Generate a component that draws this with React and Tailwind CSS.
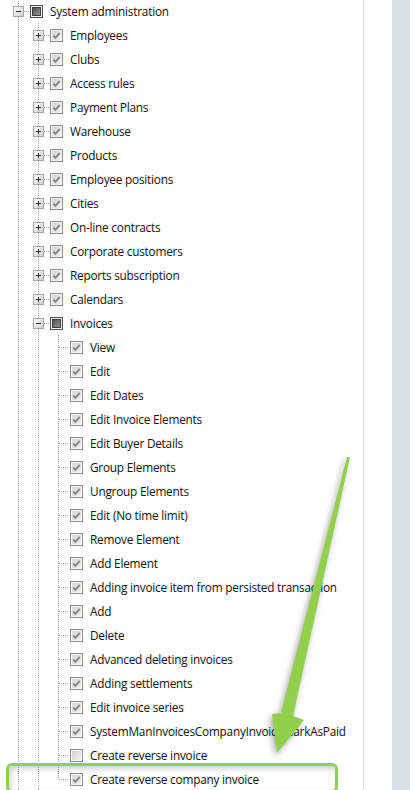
import React from 'react';

const tree = [
    { label: 'System administration', level: 0, kind: 'open', state: 'partial' },
    { label: 'Employees', level: 1, kind: 'closed', state: 'checked' },
    { label: 'Clubs', level: 1, kind: 'closed', state: 'checked' },
    { label: 'Access rules', level: 1, kind: 'closed', state: 'checked' },
    { label: 'Payment Plans', level: 1, kind: 'closed', state: 'checked' },
    { label: 'Warehouse', level: 1, kind: 'closed', state: 'checked' },
    { label: 'Products', level: 1, kind: 'closed', state: 'checked' },
    { label: 'Employee positions', level: 1, kind: 'closed', state: 'checked' },
    { label: 'Cities', level: 1, kind: 'closed', state: 'checked' },
    { label: 'On-line contracts', level: 1, kind: 'closed', state: 'checked' },
    { label: 'Corporate customers', level: 1, kind: 'closed', state: 'checked' },
    { label: 'Reports subscription', level: 1, kind: 'closed', state: 'checked' },
    { label: 'Calendars', level: 1, kind: 'closed', state: 'checked' },
    { label: 'Invoices', level: 1, kind: 'open', state: 'partial' },
    { label: 'View', level: 2, kind: 'leaf', state: 'checked' },
    { label: 'Edit', level: 2, kind: 'leaf', state: 'checked' },
    { label: 'Edit Dates', level: 2, kind: 'leaf', state: 'checked' },
    { label: 'Edit Invoice Elements', level: 2, kind: 'leaf', state: 'checked' },
    { label: 'Edit Buyer Details', level: 2, kind: 'leaf', state: 'checked' },
    { label: 'Group Elements', level: 2, kind: 'leaf', state: 'checked' },
    { label: 'Ungroup Elements', level: 2, kind: 'leaf', state: 'checked' },
    { label: 'Edit (No time limit)', level: 2, kind: 'leaf', state: 'checked' },
    { label: 'Remove Element', level: 2, kind: 'leaf', state: 'checked' },
    { label: 'Add Element', level: 2, kind: 'leaf', state: 'checked' },
    { label: 'Adding invoice item from persisted transaction', level: 2, kind: 'leaf', state: 'checked' },
    { label: 'Add', level: 2, kind: 'leaf', state: 'checked' },
    { label: 'Delete', level: 2, kind: 'leaf', state: 'checked' },
    { label: 'Advanced deleting invoices', level: 2, kind: 'leaf', state: 'checked' },
    { label: 'Adding settlements', level: 2, kind: 'leaf', state: 'checked' },
    { label: 'Edit invoice series', level: 2, kind: 'leaf', state: 'checked' },
    { label: 'SystemManInvoicesCompanyInvoiceMarkAsPaid', level: 2, kind: 'leaf', state: 'checked' },
    { label: 'Create reverse invoice', level: 2, kind: 'leaf', state: 'unchecked' },
    { label: 'Create reverse company invoice', level: 2, kind: 'leaf', state: 'checked', last: true, highlight: true }
];

const DOT = '#a3a3a3';

// one 20x24 slot of the tree gutter: guide line, connector and +/- box
const Gutter = ({ kind, last }) => (
    <svg width="20" height="24" className="shrink-0 block" shapeRendering="crispEdges">
        {kind !== 'blank' && (
            <line x1="9.5" y1="0" x2="9.5" y2={last ? 12 : 24} stroke={DOT} strokeDasharray="1 1" />
        )}
        {(kind === 'leaf' || kind === 'open' || kind === 'closed') && (
            <line x1={kind === 'leaf' ? 10 : 15} y1="12.5" x2="21" y2="12.5" stroke={DOT} strokeDasharray="1 1" />
        )}
        {(kind === 'open' || kind === 'closed') && (
            <g>
                <rect x="4.5" y="7.5" width="10" height="10" fill="url(#exp-fill)" stroke="#a8a8a8" />
                <line x1="7" y1="12.5" x2="12" y2="12.5" stroke="#2d2d2d" />
                {kind === 'closed' && <line x1="9.5" y1="10" x2="9.5" y2="15" stroke="#2d2d2d" />}
            </g>
        )}
    </svg>
);

const Check = ({ state }) => (
    <svg width="13" height="13" className="shrink-0 block" shapeRendering="crispEdges">
        <rect x="0.5" y="0.5" width="12" height="12" fill="#f4f4f4" stroke={state === 'partial' ? '#4d4d4d' : '#8e8f8f'} />
        <rect x="2" y="2" width="9" height="9" fill={state === 'unchecked' ? 'url(#box-empty)' : 'url(#box-fill)'} />
        {state === 'partial' && (
            <rect x="2.5" y="2.5" width="8" height="8" fill="url(#box-partial)" stroke="#3d3d3d" />
        )}
        {state === 'checked' && (
            <polyline points="3.2,6.6 5.4,8.8 9.8,3.8" fill="none" stroke="#858585" strokeWidth="1.9" shapeRendering="geometricPrecision" />
        )}
    </svg>
);

const TreeRow = ({ node }) => {
    const guides = [];
    for (let i = 0; i < node.level; i++) guides.push(<Gutter key={i} kind="line" />);

    return (
        <div className="relative flex items-center h-[24px] pl-[9px]">
            {guides}
            <Gutter kind={node.kind} last={node.last} />
            <div className="ml-[1px]">
                <Check state={node.state} />
            </div>
            <span className="ml-[7px] whitespace-nowrap text-[11.8px] tracking-[-0.22px] leading-[24px] text-[#111]">
                {node.label}
            </span>
            {node.highlight && (
                <div className="absolute left-[6px] top-[-4px] w-[332px] h-[30px] rounded-[6px] border-[3px] border-[#8fd14a] shadow-[inset_2px_3px_5px_rgba(0,0,0,0.18)]" />
            )}
        </div>
    );
};

export default function App() {
    return (
        <div
            className="relative flex w-[410px] h-[790px] overflow-hidden bg-white"
            style={{ fontFamily: '"Open Sans", "Noto Sans", sans-serif' }}
        >
            <svg width="0" height="0" className="absolute">
                <defs>
                    <linearGradient id="exp-fill" x1="0" y1="0" x2="1" y2="1">
                        <stop offset="0" stopColor="#ffffff" />
                        <stop offset="1" stopColor="#cfcfcf" />
                    </linearGradient>
                    <linearGradient id="box-fill" x1="0" y1="0" x2="1" y2="1">
                        <stop offset="0" stopColor="#d6d6d6" />
                        <stop offset="1" stopColor="#f0f0f0" />
                    </linearGradient>
                    <linearGradient id="box-empty" x1="0" y1="0" x2="1" y2="1">
                        <stop offset="0" stopColor="#cfcfcf" />
                        <stop offset="1" stopColor="#f2f2f2" />
                    </linearGradient>
                    <linearGradient id="box-partial" x1="0" y1="0" x2="1" y2="1">
                        <stop offset="0" stopColor="#4a4a4a" />
                        <stop offset="1" stopColor="#9a9a9a" />
                    </linearGradient>
                </defs>
            </svg>

            {/* Permission tree */}
            <div className="flex-1 min-w-0 mt-[-1px]">
                {tree.map((node, i) => (
                    <TreeRow key={i} node={node} />
                ))}
            </div>

            {/* Right edge */}
            <div className="w-[29px] shrink-0 border-l border-[#e3e3e3] bg-white" />
            <div className="w-[18px] shrink-0 bg-[#d6e0e8]" />

            {/* Annotation arrow */}
            <svg
                width="410"
                height="790"
                className="absolute left-0 top-0 pointer-events-none"
                style={{ filter: 'drop-shadow(-2px 3px 3px rgba(0,0,0,0.35))' }}
            >
                <polygon
                    points="347,457 350,457 293,716 304,720 277,753 272,714 281,713"
                    fill="#92d04c"
                />
            </svg>
        </div>
    );
}
